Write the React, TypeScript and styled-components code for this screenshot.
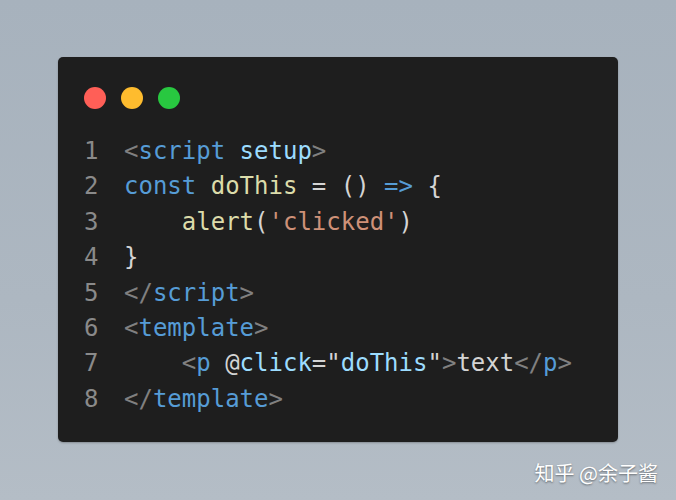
import React from "react";
import styled, { createGlobalStyle } from "styled-components";

const Global = createGlobalStyle`
  html, body { margin: 0; padding: 0; }
  body {
    width: 676px;
    height: 500px;
    overflow: hidden;
    background: linear-gradient(180deg, #a7b2bd 0%, #adb7c1 60%, #b4bdc6 100%);
  }
`;

const Page = styled.div`
  width: 676px;
  height: 500px;
  box-sizing: border-box;
  padding: 57px 0 0 58px;
  display: flex;
  flex-direction: column;
`;

const Card = styled.div`
  width: 560px;
  height: 385px;
  box-sizing: border-box;
  background: #1e1e1e;
  border-radius: 5px;
  padding: 30px 0 0 26px;
  box-shadow: 0 1px 2px rgba(0, 0, 0, 0.25);
  display: flex;
  flex-direction: column;
`;

const Dots = styled.div`
  display: flex;
  gap: 15px;
`;

const Dot = styled.span<{ $c: string }>`
  width: 22px;
  height: 22px;
  border-radius: 50%;
  background: ${(p) => p.$c};
`;

const Code = styled.div`
  margin-top: 25px;
  font-family: "DejaVu Sans Mono", "Liberation Mono", monospace;
  font-size: 24px;
  line-height: 35.4px;
  color: #d4d4d4;
`;

const Line = styled.div`
  display: flex;
  white-space: pre;
`;

const Num = styled.span`
  width: 40px;
  flex: none;
  color: #8a8a8a;
`;

const T = styled.span<{ $c: string }>`
  color: ${(p) => p.$c};
`;

const Footer = styled.div`
  display: flex;
  justify-content: flex-end;
  padding-right: 18px;
  margin-top: 16px;
  font-family: "Noto Sans CJK SC", "Noto Sans", sans-serif;
  font-size: 20px;
  color: #ffffff;
  text-shadow: 0 1px 2px rgba(0, 0, 0, 0.45);
`;

const C = {
  punc: "#808080",
  tag: "#569cd6",
  attr: "#9cdcfe",
  fn: "#dcdcaa",
  kw: "#569cd6",
  str: "#ce9178",
  text: "#d4d4d4",
};

type Tok = [string, string];

const lines: Tok[][] = [
  [[C.punc, "<"], [C.tag, "script"], [C.text, " "], [C.attr, "setup"], [C.punc, ">"]],
  [[C.kw, "const"], [C.text, " "], [C.fn, "doThis"], [C.text, " = () "], [C.kw, "=>"], [C.text, " {"]],
  [[C.text, "    "], [C.fn, "alert"], [C.text, "("], [C.str, "'clicked'"], [C.text, ")"]],
  [[C.text, "}"]],
  [[C.punc, "</"], [C.tag, "script"], [C.punc, ">"]],
  [[C.punc, "<"], [C.tag, "template"], [C.punc, ">"]],
  [
    [C.text, "    "],
    [C.punc, "<"],
    [C.tag, "p"],
    [C.text, " @"],
    [C.attr, "click"],
    [C.text, "=\""],
    [C.attr, "doThis"],
    [C.text, "\""],
    [C.punc, ">"],
    [C.text, "text"],
    [C.punc, "</"],
    [C.tag, "p"],
    [C.punc, ">"],
  ],
  [[C.punc, "</"], [C.tag, "template"], [C.punc, ">"]],
];

export default function App() {
  return (
    <>
      <Global />
      <Page>
        <Card>
          <Dots>
            <Dot $c="#ff5f57" />
            <Dot $c="#febc2e" />
            <Dot $c="#28c840" />
          </Dots>
          <Code>
            {lines.map((toks, i) => (
              <Line key={i}>
                <Num>{i + 1}</Num>
                {toks.map(([c, s], j) => (
                  <T key={j} $c={c}>
                    {s}
                  </T>
                ))}
              </Line>
            ))}
          </Code>
        </Card>
        <Footer>知乎 @余子酱</Footer>
      </Page>
    </>
  );
}
